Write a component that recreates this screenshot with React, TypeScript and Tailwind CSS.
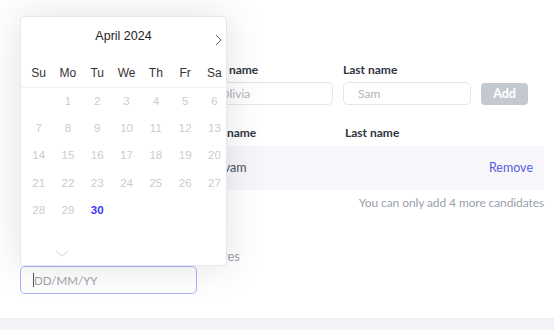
import React from "react";

const weekDays = ["Su", "Mo", "Tu", "We", "Th", "Fr", "Sa"];

// April 2024 starts on Monday
const days: (number | null)[] = [null, ...Array.from({ length: 30 }, (_, i) => i + 1)];

const CalendarPopover: React.FC = () => {
  return (
    <div
      className="absolute left-[20px] top-[16px] w-[207px] h-[250px] bg-white rounded-[4px] border border-[#e6e7eb] shadow-[0_0_40px_rgba(0,0,0,0.12)] flex flex-col"
      style={{ fontFamily: '"Liberation Sans", Arial, sans-serif' }}
    >
      <header className="relative pt-[12px] flex justify-center">
        <span className="text-[12.5px] text-[#222] leading-[14px]">April 2024</span>
        <button className="absolute right-[4px] top-[17px] w-[7px] h-[12px]" aria-label="Next month">
          <svg width="7" height="12" viewBox="0 0 7 12" fill="none">
            <path d="M1 1l5 5-5 5" stroke="#555" strokeWidth="1" />
          </svg>
        </button>
      </header>
      <div className="grid grid-cols-[repeat(7,29.3px)] pl-[3px] mt-[23px] pb-[7px] border-b border-[#f0f1f3]">
        {weekDays.map((d) => (
          <span key={d} className="text-center text-[12px] text-[#333] leading-[14px]">
            {d}
          </span>
        ))}
      </div>
      <div className="grid grid-cols-[repeat(7,29.3px)] auto-rows-[27.2px] pl-[3px]">
        {days.map((d, i) => (
          <span
            key={i}
            className={
              d === 30
                ? "flex items-center justify-center text-[11.5px] font-bold text-[#3b36f0]"
                : "flex items-center justify-center text-[11.5px] text-[#c9ccd2]"
            }
          >
            {d ?? ""}
          </span>
        ))}
      </div>
      <div className="flex-1" />
      <div className="pl-[34px] pb-[8px] flex">
        <svg width="14" height="7" viewBox="0 0 14 7" fill="none">
          <path d="M1 1l6 5 6-5" stroke="#d3d5da" strokeWidth="1" />
        </svg>
      </div>
    </div>
  );
};

export default function App() {
  return (
    <div
      className="relative w-[554px] h-[330px] overflow-hidden bg-white flex flex-col"
      style={{ fontFamily: 'Lato, "Noto Sans", sans-serif' }}
    >
      <main className="flex-1 pl-[20px] pr-[10px] pt-[63px] flex flex-col">
        <section className="ml-[185px] flex flex-col">
          <div className="flex items-end gap-[10px]">
            <label className="flex flex-col gap-[5px] w-[128px]">
              <span className="-ml-[3px] text-[12px] font-bold text-[#2f3542] leading-[14px]">First name</span>
              <input
                className="h-[23px] rounded-[5px] border border-[#e3e5ea] px-[14px] text-[12px] outline-none placeholder:text-[#b0b4bc]"
                placeholder="Olivia"
              />
            </label>
            <label className="flex flex-col gap-[5px] w-[128px]">
              <span className="text-[12px] font-bold text-[#2f3542] leading-[14px]">Last name</span>
              <input
                className="h-[23px] rounded-[5px] border border-[#e3e5ea] px-[14px] text-[12px] outline-none placeholder:text-[#b0b4bc]"
                placeholder="Sam"
              />
            </label>
            <button className="w-[47px] h-[22px] rounded-[4px] bg-[#c4c8d1] text-white text-[12.5px] font-bold leading-[22px]">
              Add
            </button>
          </div>

          <div className="flex mt-[21px] -ml-[5px] text-[12px] font-bold text-[#2f3542] leading-[14px]">
            <span className="w-[145px]">First name</span>
            <span>Last name</span>
          </div>

          <div className="mt-[6px] -ml-[10px] h-[44px] bg-[#f7f7fb] flex items-center pl-[12px] pr-[11px] text-[12.5px] leading-[16px]">
            <span className="text-[#4b5160]">Shivam</span>
            <span className="flex-1" />
            <button className="text-[#5b5ce0]">Remove</button>
          </div>

          <p className="mt-[5px] text-right text-[12px] tracking-[-0.1px] text-[#9ca1aa] leading-[16px]">
            You can only add 4 more candidates
          </p>
        </section>

        <section className="mt-[38px] flex flex-col">
          <p className="w-[220px] whitespace-nowrap text-right text-[13px] text-[#9ca1aa] leading-[14px]">
            Link expires
          </p>
          <div className="relative mt-[3px] w-[177px]">
            <input
              className="w-full h-[28px] rounded-[5px] border-[1.5px] border-[#a9b1fb] pl-[13px] pr-[12px] text-[11.5px] outline-none placeholder:text-[#a0a5ae]"
              placeholder="DD/MM/YY"
            />
            <span className="absolute left-[13px] top-[7px] w-px h-[14px] bg-[#555]" />
          </div>
        </section>
      </main>
      <div className="h-[12px] bg-[#f3f4f8] border-t border-[#eceef3]" />

      <CalendarPopover />
    </div>
  );
}
